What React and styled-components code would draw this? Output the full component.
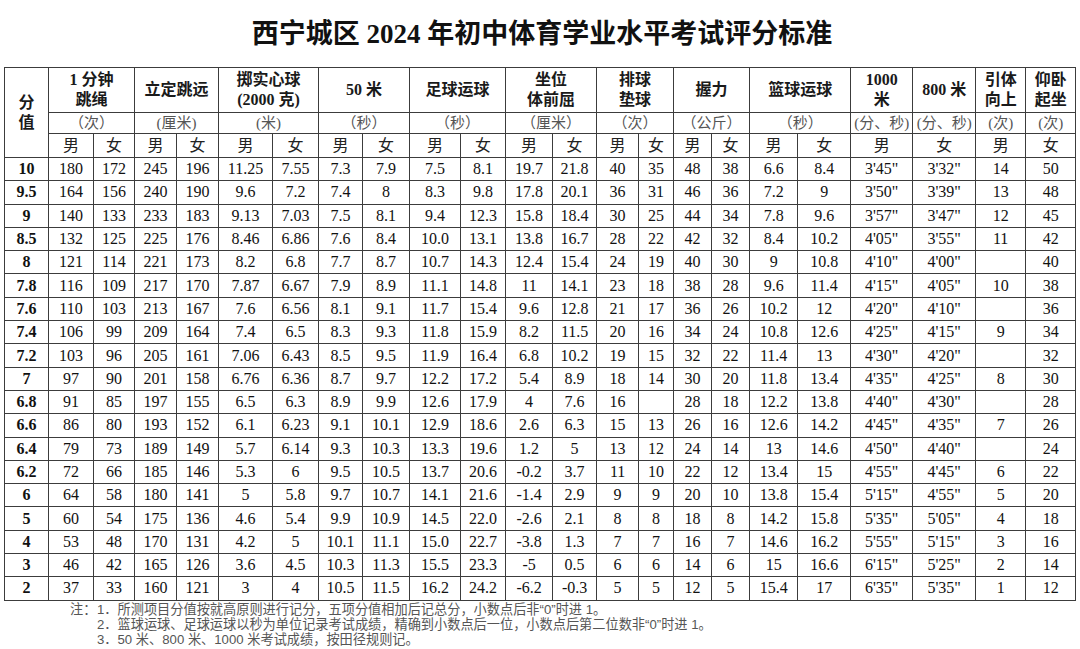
import React from 'react';
import styled, { createGlobalStyle } from 'styled-components';

const GlobalStyle = createGlobalStyle`
  html, body {
    margin: 0;
    padding: 0;
    background: #fff;
  }
  body {
    font-family: "Liberation Serif", "Noto Sans CJK SC", serif;
    color: #111;
  }
`;

const Page = styled.div`
  width: 1080px;
  height: 649px;
  overflow: hidden;
  padding: 0 0 0 4px;
  box-sizing: border-box;
`;

const Title = styled.h1`
  margin: 0;
  padding: 19px 0 0 0;
  height: 67px;
  box-sizing: border-box;
  text-align: center;
  font-family: "Liberation Serif", "Noto Sans CJK SC", serif;
  font-size: 27px;
  font-weight: 700;
  line-height: 30px;
  color: #111;
`;

const Table = styled.table`
  border-collapse: collapse;
  table-layout: fixed;
  width: 1071px;
  border: 1.5px solid #222;
`;

const Cell = styled.td`
  border: 1px solid #3c3c3c;
  padding: 0;
  text-align: center;
  vertical-align: middle;
  line-height: 1;
  white-space: nowrap;
`;

const HeadCell = styled(Cell).attrs({ as: 'th' })`
  font-size: 16px;
  font-weight: 700;
  line-height: 20px;
  color: #1a1a1a;
`;

const UnitCell = styled(Cell)`
  font-size: 15px;
  color: #555;
`;

const GenderCell = styled(Cell)`
  font-size: 16px;
  color: #222;
`;

const DataCell = styled(Cell)`
  font-size: 16px;
  font-weight: ${(p) => (p.$score ? 700 : 400)};
  color: #111;
`;

const Row = styled.tr`
  height: ${(p) => p.$h}px;
`;

const Notes = styled.div`
  display: flex;
  padding: 1px 0 0 66px;
  font-family: "Liberation Sans", "Noto Sans CJK SC", sans-serif;
  font-size: 13.2px;
  line-height: 15px;
  color: #555;
`;

const NoteLabel = styled.span`
  width: 27px;
  flex: none;
`;

const NoteList = styled.div`
  display: flex;
  flex-direction: column;
`;

const NoteLine = styled.div`
  height: 15px;
  line-height: 15px;
  white-space: nowrap;
`;

const widths = [44, 45, 41, 42, 42, 54, 46, 44, 47, 51, 45, 47, 44, 42, 35, 38, 38, 48, 53, 62, 63, 50, 50];

const groups = [
  { title: ['1 分钟', '跳绳'], unit: '（次）' },
  { title: ['立定跳远'], unit: '(厘米)' },
  { title: ['掷实心球', '(2000 克)'], unit: '(米)' },
  { title: ['50 米'], unit: '（秒）' },
  { title: ['足球运球'], unit: '（秒）' },
  { title: ['坐位', '体前屈'], unit: '（厘米）' },
  { title: ['排球', '垫球'], unit: '（次）' },
  { title: ['握力'], unit: '（公斤）' },
  { title: ['篮球运球'], unit: '（秒）' },
];

const singles = [
  { title: ['1000', '米'], unit: '(分、秒)', g: '男' },
  { title: ['800 米'], unit: '(分、秒)', g: '女' },
  { title: ['引体', '向上'], unit: '(次)', g: '男' },
  { title: ['仰卧', '起坐'], unit: '(次)', g: '女' },
];

const rows = [
  ['10', '180', '172', '245', '196', '11.25', '7.55', '7.3', '7.9', '7.5', '8.1', '19.7', '21.8', '40', '35', '48', '38', '6.6', '8.4', `3'45"`, `3'32"`, '14', '50'],
  ['9.5', '164', '156', '240', '190', '9.6', '7.2', '7.4', '8', '8.3', '9.8', '17.8', '20.1', '36', '31', '46', '36', '7.2', '9', `3'50"`, `3'39"`, '13', '48'],
  ['9', '140', '133', '233', '183', '9.13', '7.03', '7.5', '8.1', '9.4', '12.3', '15.8', '18.4', '30', '25', '44', '34', '7.8', '9.6', `3'57"`, `3'47"`, '12', '45'],
  ['8.5', '132', '125', '225', '176', '8.46', '6.86', '7.6', '8.4', '10.0', '13.1', '13.8', '16.7', '28', '22', '42', '32', '8.4', '10.2', `4'05"`, `3'55"`, '11', '42'],
  ['8', '121', '114', '221', '173', '8.2', '6.8', '7.7', '8.7', '10.7', '14.3', '12.4', '15.4', '24', '19', '40', '30', '9', '10.8', `4'10"`, `4'00"`, '', '40'],
  ['7.8', '116', '109', '217', '170', '7.87', '6.67', '7.9', '8.9', '11.1', '14.8', '11', '14.1', '23', '18', '38', '28', '9.6', '11.4', `4'15"`, `4'05"`, '10', '38'],
  ['7.6', '110', '103', '213', '167', '7.6', '6.56', '8.1', '9.1', '11.7', '15.4', '9.6', '12.8', '21', '17', '36', '26', '10.2', '12', `4'20"`, `4'10"`, '', '36'],
  ['7.4', '106', '99', '209', '164', '7.4', '6.5', '8.3', '9.3', '11.8', '15.9', '8.2', '11.5', '20', '16', '34', '24', '10.8', '12.6', `4'25"`, `4'15"`, '9', '34'],
  ['7.2', '103', '96', '205', '161', '7.06', '6.43', '8.5', '9.5', '11.9', '16.4', '6.8', '10.2', '19', '15', '32', '22', '11.4', '13', `4'30"`, `4'20"`, '', '32'],
  ['7', '97', '90', '201', '158', '6.76', '6.36', '8.7', '9.7', '12.2', '17.2', '5.4', '8.9', '18', '14', '30', '20', '11.8', '13.4', `4'35"`, `4'25"`, '8', '30'],
  ['6.8', '91', '85', '197', '155', '6.5', '6.3', '8.9', '9.9', '12.6', '17.9', '4', '7.6', '16', '', '28', '18', '12.2', '13.8', `4'40"`, `4'30"`, '', '28'],
  ['6.6', '86', '80', '193', '152', '6.1', '6.23', '9.1', '10.1', '12.9', '18.6', '2.6', '6.3', '15', '13', '26', '16', '12.6', '14.2', `4'45"`, `4'35"`, '7', '26'],
  ['6.4', '79', '73', '189', '149', '5.7', '6.14', '9.3', '10.3', '13.3', '19.6', '1.2', '5', '13', '12', '24', '14', '13', '14.6', `4'50"`, `4'40"`, '', '24'],
  ['6.2', '72', '66', '185', '146', '5.3', '6', '9.5', '10.5', '13.7', '20.6', '-0.2', '3.7', '11', '10', '22', '12', '13.4', '15', `4'55"`, `4'45"`, '6', '22'],
  ['6', '64', '58', '180', '141', '5', '5.8', '9.7', '10.7', '14.1', '21.6', '-1.4', '2.9', '9', '9', '20', '10', '13.8', '15.4', `5'15"`, `4'55"`, '5', '20'],
  ['5', '60', '54', '175', '136', '4.6', '5.4', '9.9', '10.9', '14.5', '22.0', '-2.6', '2.1', '8', '8', '18', '8', '14.2', '15.8', `5'35"`, `5'05"`, '4', '18'],
  ['4', '53', '48', '170', '131', '4.2', '5', '10.1', '11.1', '15.0', '22.7', '-3.8', '1.3', '7', '7', '16', '7', '14.6', '16.2', `5'55"`, `5'15"`, '3', '16'],
  ['3', '46', '42', '165', '126', '3.6', '4.5', '10.3', '11.3', '15.5', '23.3', '-5', '0.5', '6', '6', '14', '6', '15', '16.6', `6'15"`, `5'25"`, '2', '14'],
  ['2', '37', '33', '160', '121', '3', '4', '10.5', '11.5', '16.2', '24.2', '-6.2', '-0.3', '5', '5', '12', '5', '15.4', '17', `6'35"`, `5'35"`, '1', '12'],
];

const notes = [
  '1．所测项目分值按就高原则进行记分，五项分值相加后记总分，小数点后非“0”时进 1。',
  '2．篮球运球、足球运球以秒为单位记录考试成绩，精确到小数点后一位，小数点后第二位数非“0”时进 1。',
  '3．50 米、800 米、1000 米考试成绩，按田径规则记。',
];

const Lines = ({ parts }) =>
  parts.map((t, i) => (
    <React.Fragment key={i}>
      {i > 0 && <br />}
      {t}
    </React.Fragment>
  ));

export default function App() {
  return (
    <Page>
      <GlobalStyle />
      <Title>西宁城区 2024 年初中体育学业水平考试评分标准</Title>
      <Table>
        <colgroup>
          {widths.map((w, i) => (
            <col key={i} style={{ width: w }} />
          ))}
        </colgroup>
        <thead>
          <Row $h={45}>
            <HeadCell rowSpan={3}>
              分<br />值
            </HeadCell>
            {groups.map((g, i) => (
              <HeadCell key={i} colSpan={2}>
                <Lines parts={g.title} />
              </HeadCell>
            ))}
            {singles.map((s, i) => (
              <HeadCell key={i}>
                <Lines parts={s.title} />
              </HeadCell>
            ))}
          </Row>
          <Row $h={21}>
            {groups.map((g, i) => (
              <UnitCell key={i} colSpan={2}>
                {g.unit}
              </UnitCell>
            ))}
            {singles.map((s, i) => (
              <UnitCell key={i}>{s.unit}</UnitCell>
            ))}
          </Row>
          <Row $h={24}>
            {groups.flatMap((g, i) => [
              <GenderCell key={i + 'm'}>男</GenderCell>,
              <GenderCell key={i + 'f'}>女</GenderCell>,
            ])}
            {singles.map((s, i) => (
              <GenderCell key={i}>{s.g}</GenderCell>
            ))}
          </Row>
        </thead>
        <tbody>
          {rows.map((r, i) => (
            <Row key={i} $h={23.3}>
              {r.map((v, j) => (
                <DataCell key={j} $score={j === 0}>
                  {v}
                </DataCell>
              ))}
            </Row>
          ))}
        </tbody>
      </Table>
      <Notes>
        <NoteLabel>注：</NoteLabel>
        <NoteList>
          {notes.map((n, i) => (
            <NoteLine key={i}>{n}</NoteLine>
          ))}
        </NoteList>
      </Notes>
    </Page>
  );
}
